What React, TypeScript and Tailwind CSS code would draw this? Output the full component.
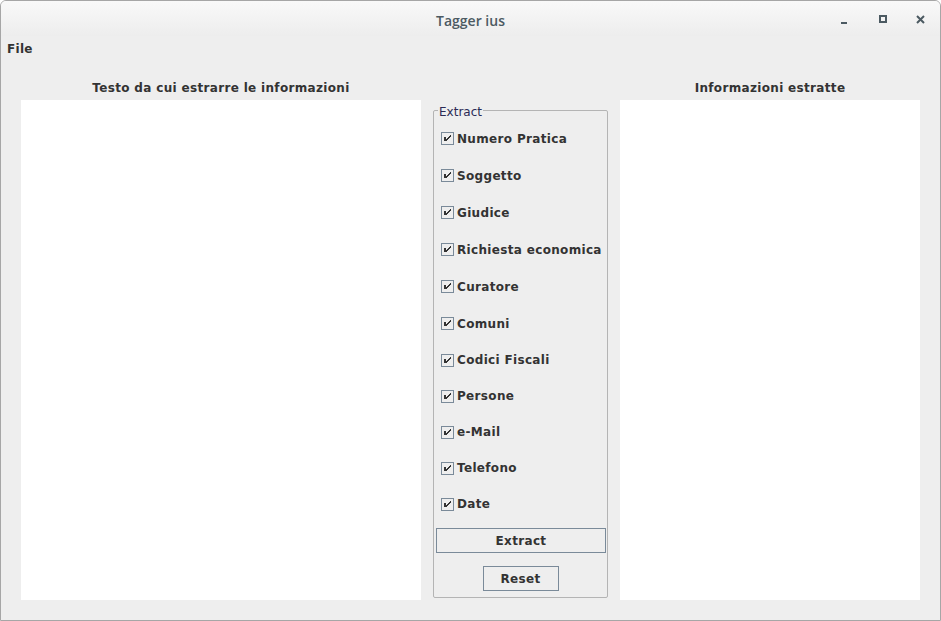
import React from "react";

const items = [
  { label: "Numero Pratica", h: "h-[37px]" },
  { label: "Soggetto", h: "h-[37px]" },
  { label: "Giudice", h: "h-[37px]" },
  { label: "Richiesta economica", h: "h-[37px]" },
  { label: "Curatore", h: "h-[37px]" },
  { label: "Comuni", h: "h-[37px]" },
  { label: "Codici Fiscali", h: "h-[36px]" },
  { label: "Persone", h: "h-[36px]" },
  { label: "e-Mail", h: "h-[36px]" },
  { label: "Telefono", h: "h-[36px]" },
  { label: "Date", h: "h-[36px]" },
];

function CheckBox() {
  return (
    <div className="w-[13px] h-[13px] border border-[#7a8a99] bg-[#eeeeee] shrink-0 relative">
      <svg width="13" height="13" viewBox="0 0 13 13" className="absolute left-[-1px] top-[-1px]" shapeRendering="crispEdges">
        <g fill="#333333">
          <rect x="3" y="5" width="2" height="4" />
          <rect x="9" y="3" width="1" height="2" />
          <rect x="8" y="4" width="1" height="2" />
          <rect x="7" y="5" width="1" height="2" />
          <rect x="6" y="6" width="1" height="2" />
          <rect x="5" y="7" width="1" height="2" />
        </g>
      </svg>
    </div>
  );
}

export default function App() {
  const font = { fontFamily: "'DejaVu Sans', sans-serif" };
  return (
    <div className="w-[941px] h-[621px] bg-[#eeeeee] flex flex-col border border-[#a6a6a6] rounded-t-[6px] overflow-hidden" style={font}>
      {/* Title bar */}
      <div className="h-[35px] shrink-0 bg-gradient-to-b from-[#f9f9f9] to-[#ededed] flex items-center relative">
        <div className="flex-1 text-center text-[14px] font-semibold text-[#4c5a62] pt-[4px]" style={{ fontFamily: "'Open Sans', sans-serif" }}>
          Tagger ius
        </div>
        <div className="absolute right-0 top-0 h-[36px] flex items-center">
          <div className="w-[39px] flex justify-center pt-[8px]">
            <div className="w-[6px] h-[2px] bg-[#4c5a62]" />
          </div>
          <div className="w-[39px] flex justify-center">
            <div className="w-[8px] h-[8px] border-2 border-[#4c5a62]" />
          </div>
          <div className="w-[38px] flex justify-center pr-[1px]">
            <svg width="9" height="9" viewBox="0 0 9 9">
              <path d="M1 1 L8 8 M8 1 L1 8" stroke="#4c5a62" strokeWidth="2" />
            </svg>
          </div>
        </div>
      </div>
      {/* Menu bar */}
      <div className="h-[24px] shrink-0 flex items-center px-[6px] pt-[2px] text-[12px] font-bold tracking-[0.3px] text-[#333333]">
        <span>File</span>
      </div>
      {/* Content */}
      <div className="flex-1 flex pl-[20px] pr-[20px] pb-[20px] tracking-[0.33px]">
        {/* Left */}
        <div className="w-[400px] flex flex-col">
          <div className="h-[40px] flex items-center justify-center pt-[16px] font-bold text-[12px] text-[#333333]">
            Testo da cui estrarre le informazioni
          </div>
          <div className="flex-1 bg-white" />
        </div>
        {/* Middle */}
        <div className="w-[175px] ml-[12px] mr-[12px] pt-[50px] pb-[2px] flex flex-col">
          <div className="flex-1 border border-[#b4b4b4] rounded-[2px] relative pt-[9px] flex flex-col">
            <span className="absolute left-[4px] top-[-7px] px-[1px] bg-[#eeeeee] text-[12px] leading-[16px] text-[#2b2b55] tracking-normal">
              Extract
            </span>
            <div className="flex flex-col pl-[7px]">
              {items.map((it) => (
                <div key={it.label} className={`${it.h} flex items-center gap-[3px]`}>
                  <CheckBox />
                  <span className="font-bold text-[12px] text-[#333333] whitespace-nowrap">{it.label}</span>
                </div>
              ))}
            </div>
            <div className="pl-[2px] pr-[1px] mt-[6px]">
              <div className="h-[25px] border border-[#7a8a99] flex items-center justify-center font-bold text-[12px] text-[#333333]">
                Extract
              </div>
            </div>
            <div className="flex justify-center mt-[13px]">
              <div className="w-[76px] h-[25px] border border-[#7a8a99] flex items-center justify-center font-bold text-[12px] text-[#333333]">
                Reset
              </div>
            </div>
          </div>
        </div>
        {/* Right */}
        <div className="w-[300px] flex flex-col">
          <div className="h-[40px] flex items-center justify-center pt-[16px] font-bold text-[12px] text-[#333333]">
            Informazioni estratte
          </div>
          <div className="flex-1 bg-white" />
        </div>
      </div>
    </div>
  );
}
